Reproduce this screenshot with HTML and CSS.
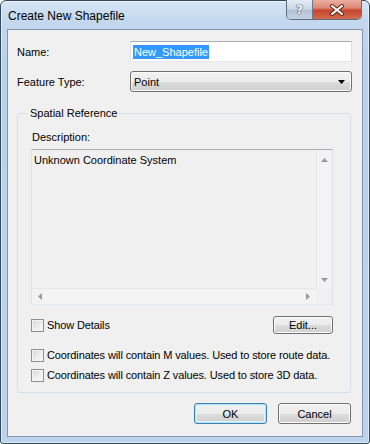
FILE: index.html
```html
<!DOCTYPE html>
<html>
<head>
<meta charset="utf-8">
<title>Create New Shapefile</title>
<link rel="stylesheet" href="styles.css">
</head>
<body>
<div class="window">
  <div class="titlebar">
    <span class="title">Create New Shapefile</span>
    <div class="caption-btns">
      <div class="cap help">?</div>
      <div class="cap close">
        <svg width="16" height="12" viewBox="0 0 16 12">
          <path d="M3 2 L13 10 M13 2 L3 10" stroke="#5a2218" stroke-width="4" stroke-linecap="round"/>
          <path d="M3 2 L13 10 M13 2 L3 10" stroke="#ffffff" stroke-width="2.2" stroke-linecap="round"/>
        </svg>
      </div>
    </div>
  </div>
  <div class="client">
    <div class="form">
      <span class="lbl">Name:</span>
      <div class="textbox"><span class="sel">New_Shapefile</span></div>
      <span class="lbl">Feature Type:</span>
      <div class="combo">
        <span>Point</span>
        <svg class="combo-arrow" width="7" height="4" viewBox="0 0 7 4"><path d="M0 0 H7 L3.5 4 Z" fill="#000"/></svg>
      </div>
    </div>
    <fieldset class="group">
      <legend>Spatial Reference</legend>
      <div class="desc-label">Description:</div>
      <div class="textarea">
        <div class="ta-main">
          <div class="ta-text">Unknown Coordinate System</div>
          <div class="vscroll">
            <svg width="7" height="4" viewBox="0 0 7 4"><path d="M0 4 H7 L3.5 0 Z" fill="#9a9a9a"/></svg>
            <svg width="7" height="4" viewBox="0 0 7 4"><path d="M0 0 H7 L3.5 4 Z" fill="#9a9a9a"/></svg>
          </div>
        </div>
        <div class="ta-bottom">
          <div class="hscroll">
            <svg width="4" height="7" viewBox="0 0 4 7"><path d="M4 0 V7 L0 3.5 Z" fill="#9a9a9a"/></svg>
            <svg width="4" height="7" viewBox="0 0 4 7"><path d="M0 0 V7 L4 3.5 Z" fill="#9a9a9a"/></svg>
          </div>
          <div class="corner"></div>
        </div>
      </div>
      <div class="details-row">
        <span class="check"><span class="box"></span>Show Details</span>
        <button class="btn edit">Edit...</button>
      </div>
      <span class="check row-m"><span class="box"></span>Coordinates will contain M values. Used to store route data.</span>
      <span class="check row-z"><span class="box"></span>Coordinates will contain Z values. Used to store 3D data.</span>
    </fieldset>
    <div class="actions">
      <button class="btn ok">OK</button>
      <button class="btn">Cancel</button>
    </div>
  </div>
</div>
</body>
</html>
```

FILE: styles.css
```css
html, body {
  margin: 0;
  padding: 0;
  background: #ffffff;
}

body {
  font-family: "Liberation Sans", Arial, sans-serif;
  font-size: 11px;
  color: #000;
}

.window {
  box-sizing: border-box;
  width: 370px;
  height: 444px;
  border: 1px solid #33475e;
  border-radius: 6px 6px 3px 3px;
  padding: 0 6px 6px 6px;
  background: linear-gradient(180deg, #d6e5f5 0px, #c3d8ee 20px, #bad1ea 60px, #bcd3eb 100%);
  box-shadow: inset 0 0 0 1px rgba(255, 255, 255, 0.55);
}

.titlebar {
  height: 28px;
  display: flex;
  justify-content: space-between;
  align-items: flex-start;
}

.title {
  font-size: 12px;
  line-height: 14px;
  margin-top: 8px;
  padding-left: 1px;
  color: #000;
}

.caption-btns {
  display: flex;
  margin-top: -1px;
  margin-right: 1px;
  border: 1px solid #5d6e82;
  border-top: none;
  border-radius: 0 0 5px 5px;
  overflow: hidden;
  height: 19px;
}

.cap {
  height: 19px;
  display: flex;
  align-items: center;
  justify-content: center;
}

.help {
  width: 25px;
  border-right: 1px solid #6c7b8d;
  background: linear-gradient(180deg, #e4ecf5 0%, #ccd9e7 45%, #b3c4d8 55%, #c3d3e4 100%);
  font-family: "DejaVu Sans", sans-serif;
  font-size: 13px;
  font-weight: bold;
  color: #f4f7fb;
  text-shadow: 0 0 1px #3d4f63, 0 0 1px #3d4f63, 0 0 1px #3d4f63;
  line-height: 19px;
}

.close {
  width: 48px;
  background: linear-gradient(180deg, #eab0a3 0%, #de8a76 40%, #c8462d 55%, #d36a4f 100%);
}

.client {
  box-sizing: border-box;
  height: 408px;
  border: 1px solid #8596ac;
  background: #f0f0f0;
  padding: 11px 10px 0 9px;
}

.form {
  display: grid;
  grid-template-columns: 113px 1fr;
  grid-auto-rows: 21px;
  row-gap: 9px;
  align-items: center;
}

.lbl {
  line-height: 14px;
}

.textbox {
  box-sizing: border-box;
  height: 21px;
  background: #fff;
  border: 1px solid;
  border-color: #abadb3 #dbdfe6 #e3e9ef #e2e3ea;
  padding: 0 0 0 2px;
  display: flex;
  align-items: center;
}

.sel {
  background: #3399ff;
  color: #fff;
  line-height: 14px;
  padding: 0 1px;
}

.combo {
  box-sizing: border-box;
  height: 21px;
  border: 1px solid #707070;
  border-radius: 3px;
  background: linear-gradient(180deg, #f2f2f2 0%, #ebebeb 50%, #dddddd 50%, #cfcfcf 100%);
  box-shadow: inset 0 0 0 1px #fbfbfb;
  display: flex;
  align-items: center;
  justify-content: space-between;
  padding: 0 6px 0 3px;
}

.combo-arrow {
  margin-top: 1px;
}

.group {
  margin: 14px 1px 0 0;
  padding: 0 18px 9px 13px;
  border: 1px solid #d5dfe5;
  border-radius: 3px;
  min-width: 0;
}

.group legend {
  margin-left: -3px;
  padding: 0 2px;
  line-height: 14px;
}

.desc-label {
  margin-top: 10px;
  line-height: 14px;
  margin-bottom: 5px;
  padding-left: 1px;
}

.textarea {
  box-sizing: border-box;
  width: 302px;
  height: 156px;
  border: 1px solid;
  border-color: #abadb3 #dbdfe6 #e3e9ef #e2e3ea;
  background: #f0f0f0;
  display: flex;
  flex-direction: column;
}

.ta-main {
  flex: 1;
  display: flex;
}

.ta-text {
  flex: 1;
  padding: 3px 0 0 2px;
  line-height: 14px;
}

.vscroll {
  box-sizing: border-box;
  width: 16px;
  background: #f3f3f3;
  border-left: 1px solid #e6e6e6;
  display: flex;
  flex-direction: column;
  justify-content: space-between;
  align-items: center;
  padding: 8px 0 6px 0;
}

.ta-bottom {
  height: 16px;
  display: flex;
}

.hscroll {
  box-sizing: border-box;
  flex: 1;
  background: #f3f3f3;
  border-top: 1px solid #e6e6e6;
  display: flex;
  justify-content: space-between;
  align-items: center;
  padding: 0 6px 0 6px;
}

.corner {
  width: 16px;
  background: #f0f0f0;
}

.details-row {
  margin-top: 11px;
  height: 18px;
  display: flex;
  justify-content: space-between;
  align-items: center;
}

.check {
  display: flex;
  align-items: center;
  gap: 3px;
  line-height: 15px;
  height: 15px;
  letter-spacing: -0.12px;
}

.box {
  box-sizing: border-box;
  width: 13px;
  height: 13px;
  border: 1px solid #8e8f8f;
  background: linear-gradient(135deg, #d4d4d4 0%, #f0f0f0 60%, #fafafa 100%);
  box-shadow: inset 0 0 0 1px #f4f4f4;
  flex: none;
}

.row-m {
  margin-top: 14px;
}

.row-z {
  margin-top: 5px;
}

.btn {
  box-sizing: border-box;
  font-family: "Liberation Sans", Arial, sans-serif;
  font-size: 11px;
  color: #000;
  border: 1px solid #707070;
  border-radius: 3px;
  background: linear-gradient(180deg, #f2f2f2 0%, #ebebeb 50%, #dddddd 50%, #cfcfcf 100%);
  box-shadow: inset 0 0 0 1px #fcfcfc;
  padding: 0;
  margin: 0;
}

.edit {
  width: 60px;
  height: 18px;
  margin-right: -1px;
}

.actions {
  margin-top: 10px;
  display: flex;
  justify-content: flex-end;
  gap: 11px;
  padding-right: 1px;
}

.actions .btn {
  width: 73px;
  height: 21px;
}

.actions .ok {
  border-color: #3c7fb1;
  box-shadow: inset 0 0 0 1px #b6e3f8, inset 0 0 0 2px #e2f3fb;
}
```
